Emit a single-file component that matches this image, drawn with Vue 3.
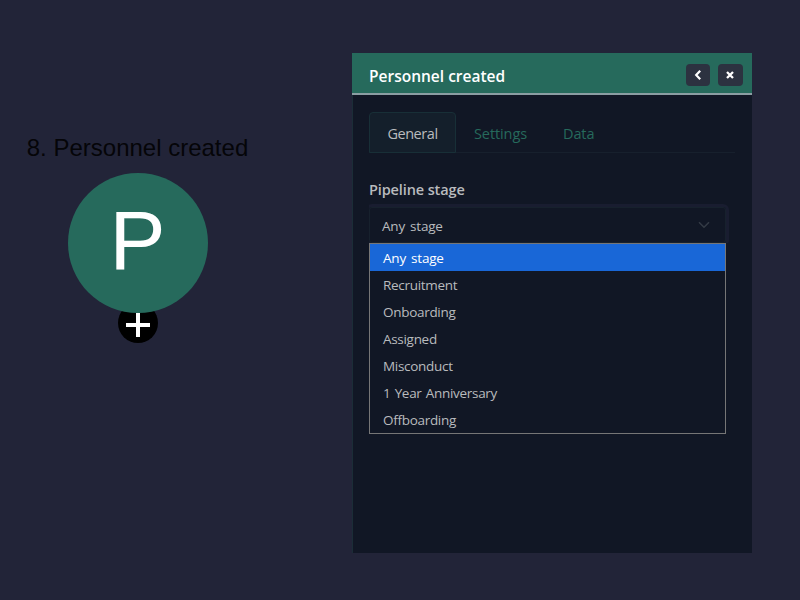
<script setup>
import { ref } from 'vue'

const tabs = ['General', 'Settings', 'Data']
const activeTab = ref('General')
const stages = [
  'Any stage',
  'Recruitment',
  'Onboarding',
  'Assigned',
  'Misconduct',
  '1 Year Anniversary',
  'Offboarding',
]
const selected = ref('Any stage')
</script>

<template>
  <main class="workspace">
    <section class="node">
      <div class="node-title">8. Personnel created</div>
      <div class="node-circle"><span>P</span></div>
      <button class="node-add" aria-label="Add step">
        <svg width="24" height="24" viewBox="0 0 24 24"><path d="M0 12H24M12 0V24" stroke="#fff" stroke-width="4" /></svg>
      </button>
    </section>

    <aside class="panel">
      <header class="panel-head">
        <h1>Personnel created</h1>
        <button class="head-btn back" aria-label="Back">
          <svg width="8" height="10" viewBox="0 0 8 10"><path d="M6.2 .8L2.2 5L6.2 9.2" fill="none" stroke="#fff" stroke-width="2.2" /></svg>
        </button>
        <button class="head-btn close" aria-label="Close">
          <svg width="8" height="8" viewBox="0 0 8 8"><path d="M1 1L7 7M7 1L1 7" stroke="#fff" stroke-width="2.3" /></svg>
        </button>
      </header>
      <nav class="tabs">
        <button
          v-for="t in tabs"
          :key="t"
          class="tab"
          :class="{ active: t === activeTab }"
          @click="activeTab = t"
        >{{ t }}</button>
      </nav>
      <div class="field">
        <label>Pipeline stage</label>
        <div class="select">
          <span>{{ selected }}</span>
          <svg width="12" height="8" viewBox="0 0 12 8"><path d="M1 1.2L6 6.2L11 1.2" fill="none" stroke="#343b46" stroke-width="1.5" /></svg>
        </div>
        <ul class="options">
          <li
            v-for="s in stages"
            :key="s"
            :class="{ chosen: s === selected }"
            @click="selected = s"
          >{{ s }}</li>
        </ul>
      </div>
    </aside>
  </main>
</template>

<style>
body {
  margin: 0;
  background: #222438;
}
</style>

<style scoped>
* {
  box-sizing: border-box;
}
button {
  border: 0;
  padding: 0;
  margin: 0;
  background: none;
  font: inherit;
}
.workspace {
  display: flex;
  align-items: flex-start;
  width: 800px;
  height: 600px;
  overflow: hidden;
  background: #222438;
  font-family: "Open Sans", "Noto Sans", sans-serif;
}
.node {
  display: flex;
  flex-direction: column;
  align-items: center;
  width: 275px;
  margin-right: 77px;
  padding-top: 134px;
  font-family: "Liberation Sans", Arial, sans-serif;
}
.node-title {
  height: 39.4px;
  line-height: 28px;
  font-size: 24px;
  color: #050508;
  white-space: nowrap;
}
.node-circle {
  z-index: 1;
  display: flex;
  align-items: center;
  justify-content: center;
  width: 140px;
  height: 140px;
  padding-bottom: 6px;
  border-radius: 50%;
  background: #266a5c;
  color: #fff;
  font-size: 84px;
  line-height: 94px;
}
.node-add {
  display: flex;
  align-items: center;
  justify-content: center;
  width: 40px;
  height: 40px;
  margin-top: -10.4px;
  padding-top: 3px;
  border-radius: 50%;
  background: #000;
}
.panel {
  width: 400px;
  height: 500px;
  margin-top: 53px;
  background: #111725;
  box-shadow: inset 1px 0 #1b2d37;
}
.panel-head {
  display: flex;
  align-items: center;
  height: 42px;
  padding: 3px 9px 0 17px;
  background: #266a5c;
  border-bottom: 2px solid #8b9ea3;
}
h1 {
  flex: 1;
  margin: 0;
  padding-top: 2px;
  font-size: 15.5px;
  line-height: 22px;
  font-weight: 600;
  color: #fff;
}
.head-btn {
  display: flex;
  align-items: center;
  justify-content: center;
  width: 24px;
  height: 22px;
  border-radius: 4px;
  background: #2c3240;
}
.close {
  width: 25px;
  margin-left: 8px;
}
.close svg {
  margin: 1px 1px 0 0;
}
.tabs {
  display: flex;
  height: 41px;
  margin: 17px 17px 0;
  border-bottom: 1px solid #17202d;
}
.tab {
  height: 41px;
  padding: 2px 17px 0;
  border: 1px solid transparent;
  font-size: 14.5px;
  letter-spacing: -0.1px;
  color: #266a5c;
}
.tab.active {
  width: 87px;
  padding: 2px 0 0;
  border-color: #182f37;
  border-radius: 4px 4px 0 0;
  background: #141f2b;
  letter-spacing: -0.45px;
  color: #b9bbbe;
}
.field {
  margin: 26px 26px 0 17px;
}
label {
  display: block;
  height: 28px;
  line-height: 22px;
  font-size: 14.5px;
  letter-spacing: -0.12px;
  font-weight: 600;
  color: #b9bbbe;
}
.select {
  display: flex;
  align-items: center;
  justify-content: space-between;
  height: 36px;
  padding: 2px 15px 0 12px;
  border: 1px solid #17212d;
  border-radius: 3px;
  box-shadow: 0 0 0 3px #191d30;
  clip-path: inset(-4px -4px 0 0);
  font-size: 13.5px;
  letter-spacing: -0.2px;
  word-spacing: 1.8px;
  color: #b9bbbe;
}
.select svg {
  margin-bottom: 2px;
}
.options {
  margin: 0;
  padding: 0;
  border: 1px solid #767676;
  background: #111725;
  list-style: none;
}
li {
  height: 27px;
  padding-left: 13px;
  line-height: 28px;
  font-size: 13.5px;
  letter-spacing: -0.3px;
  word-spacing: 1px;
  color: #b9bbbe;
}
.chosen {
  background: #1967d7;
  letter-spacing: -0.2px;
  word-spacing: 1.8px;
  color: #fff;
}
</style>
